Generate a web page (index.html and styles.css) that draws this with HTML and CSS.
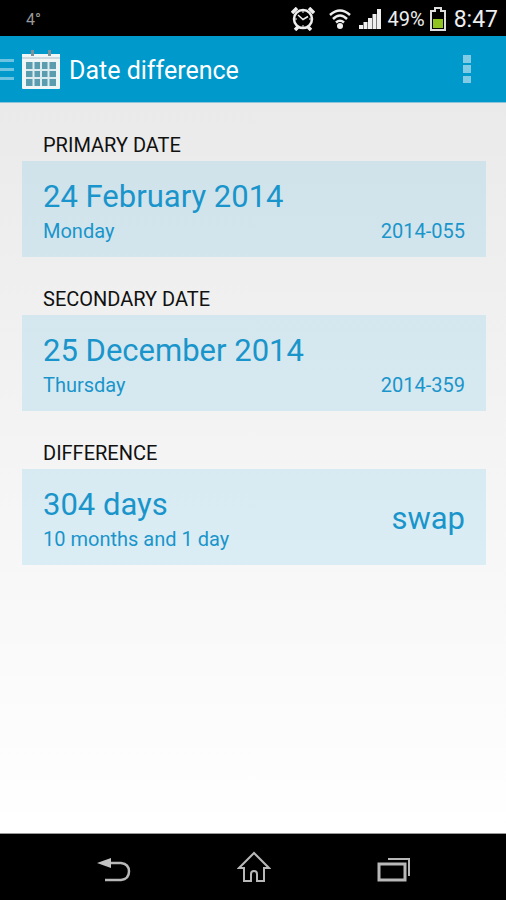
FILE: index.html
```html
<!DOCTYPE html>
<html lang="en">
<head>
    <meta charset="UTF-8">
    <meta name="viewport" content="width=device-width, initial-scale=1.0">
    <title>Date difference</title>
    <link rel="stylesheet" href="styles.css">
</head>
<body>
    <div class="status-bar">
        <span class="temperature">4°</span>
        <div class="status-icons">
            <svg width="24" height="24" viewBox="0 0 24 24" fill="none" stroke="#eee" stroke-width="2.500">
                <circle cx="12" cy="12" r="9"/>
                <path d="M7 8l5 4.500 5-3" stroke-width="1.500"/>
                <path d="M1 6l5-5M23 6l-5-5M4 23l3-3M20 23l-3-3" stroke-width="3.500"/>
                <path d="M12 4v2M12 18v2M4 12h2M18 12h2" stroke-width="1"/>
            </svg>
            <svg class="wifi" width="22" height="22" viewBox="0 0 22 22" fill="none" stroke="#eee" stroke-width="2.500">
                <path d="M1 7Q11-2 21 7M4 11Q11 4 18 11M7 14.500Q11 11 15 14.500"/>
                <circle cx="11" cy="18" r="3" fill="#eee" stroke="none"/>
            </svg>
            <svg class="signal" width="24" height="22" viewBox="0 0 24 22" fill="#eee">
                <path d="M1 17h4v4H1zM5.500 14h4v7h-4zM10 10h4v11h-4zM14.500 6h4v15h-4zM19 1h4v20h-4z"/>
            </svg>
            <span class="battery-level">49%</span>
            <svg class="battery" width="16" height="24" viewBox="0 0 16 24">
                <path d="M5 1h6v3h4v19H1V4h4z" fill="none" stroke="#ddd" stroke-width="2"/>
                <path d="M3 12h10v9H3z" fill="#8fc31f"/>
            </svg>
            <span class="clock">8:47</span>
        </div>
    </div>

    <header class="action-bar">
        <button class="menu-button" type="button" aria-label="Open menu">
            <svg width="14" height="24" viewBox="0 0 14 24" fill="#6cc3e2">
                <path d="M0 2h14v3H0zM0 11h14v3H0zM0 20h14v3H0z"/>
            </svg>
        </button>
        <svg class="app-icon" width="38" height="40" viewBox="0 0 38 40">
            <path d="M0 5h38v34q0 1-1 1H1q-1 0-1-1z" fill="#f0f5f6"/>
            <path d="M0 8.500h38v1H0z" fill="#a9bec6"/>
            <path d="M4 13h30v24H4z" fill="#5c9caf"/>
            <path d="M10.500 13h2v24h-2zM18 13h2v24h-2zM25.500 13h2v24h-2zM4 20h30v2H4zM4 28h30v2H4z" fill="#dcebef"/>
            <path d="M9 1h3v6H9zM26 1h3v6h-3z" fill="#7f929a"/>
        </svg>
        <h1 class="title">Date difference</h1>
        <button class="overflow-button" type="button" aria-label="More options">
            <svg width="10" height="30" viewBox="0 0 10 30" fill="#82cbe5">
                <path d="M1 1h8v8H1zM1 11h8v8H1zM1 22h8v7H1z"/>
            </svg>
        </button>
    </header>

    <main class="content">
        <section class="section">
            <h2 class="label">Primary date</h2>
            <button class="card" type="button">
                <span class="card-text">
                    <span class="value">24 February 2014</span>
                    <span class="detail">Monday</span>
                </span>
                <span class="detail">2014-055</span>
            </button>
        </section>
        <section class="section">
            <h2 class="label">Secondary date</h2>
            <button class="card" type="button">
                <span class="card-text">
                    <span class="value">25 December 2014</span>
                    <span class="detail">Thursday</span>
                </span>
                <span class="detail">2014-359</span>
            </button>
        </section>
        <section class="section">
            <h2 class="label">Difference</h2>
            <div class="card card-result">
                <div class="card-text">
                    <span class="value">304 days</span>
                    <span class="detail">10 months and 1 day</span>
                </div>
                <button class="swap-button value" type="button">swap</button>
            </div>
        </section>
    </main>

    <nav class="nav-bar">
        <button class="nav-button" type="button" aria-label="Back">
            <svg width="34" height="34" viewBox="0 0 34 34">
                <path d="M10 12h14q8 1 8 8.500t-8 8.500H8" fill="none" stroke="#b8b8b8" stroke-width="2.500"/>
                <path d="M0 12l14-5v10z" fill="#c4c4c4"/>
            </svg>
        </button>
        <button class="nav-button" type="button" aria-label="Home">
            <svg width="34" height="34" viewBox="0 0 34 34" fill="none" stroke="#b8b8b8" stroke-width="2">
                <path d="M17 2L2 17h5v13h7v-7q0-3 3-3t3 3v7h7V17h5z"/>
            </svg>
        </button>
        <button class="nav-button" type="button" aria-label="Recent apps">
            <svg width="34" height="34" viewBox="0 0 34 34" fill="none" stroke="#b8b8b8">
                <path d="M2 13h26v16H2z" stroke-width="3"/>
                <path d="M11 8h21v17" stroke-width="2"/>
            </svg>
        </button>
    </nav>
</body>
</html>
```
FILE: styles.css
```css
* {
    box-sizing: border-box;
}
body {
    margin: 0;
    min-height: 100vh;
    display: flex;
    flex-direction: column;
    font-family: Roboto, "Liberation Sans", sans-serif;
    background: #fff;
}
button {
    margin: 0;
    padding: 0;
    border: none;
    background: none;
    font-family: inherit;
    cursor: pointer;
}
svg {
    display: block;
}
.status-bar {
    height: 36px;
    padding: 2px 8px 0 26px;
    display: flex;
    align-items: center;
    justify-content: space-between;
    background: #000;
    color: #eee;
}
.temperature {
    font-size: 16px;
    color: #999;
}
.status-icons {
    display: flex;
    align-items: center;
}
.wifi {
    margin-left: 14px;
}
.signal {
    margin-left: 7px;
}
.battery-level {
    margin-left: 6px;
    font-size: 20px;
}
.battery {
    margin: 0 8px 0 5px;
}
.clock {
    font-size: 23px;
}
.action-bar {
    height: 67px;
    display: flex;
    align-items: center;
    background: #0099cc;
    border-bottom: 1px solid #8cc5da;
    color: #fff;
}
.app-icon {
    margin: 0 9px 0 8px;
}
.title {
    flex: 1;
    margin: 0;
    padding-top: 2px;
    font-size: 25px;
    font-weight: 400;
}
.overflow-button {
    padding: 8px 34px;
}
.content {
    flex: 1;
    padding: 30px 20px 30px 22px;
    background: linear-gradient(#eaeaea, #fff);
}
.section {
    margin-bottom: 30px;
}
.label {
    margin: 0;
    padding: 0 21px 4px;
    font-size: 20px;
    line-height: 24px;
    font-weight: 400;
    text-transform: uppercase;
    color: #111;
}
.card {
    width: 100%;
    min-height: 96px;
    padding: 16px 21px 12px;
    display: flex;
    align-items: flex-end;
    justify-content: space-between;
    background: rgba(51, 181, 229, 0.15);
    color: #1a95cb;
    text-align: left;
}
.card-result {
    align-items: center;
}
.card-text {
    display: flex;
    flex-direction: column;
}
.value {
    font-size: 31px;
    line-height: 40px;
}
.detail {
    font-size: 20px;
    line-height: 28px;
}
.swap-button {
    color: inherit;
}
.nav-bar {
    height: 67px;
    padding: 2px 42px 0 44px;
    display: flex;
    align-items: center;
    justify-content: space-around;
    background: #000;
    border-top: 1px solid #999;
}
```
